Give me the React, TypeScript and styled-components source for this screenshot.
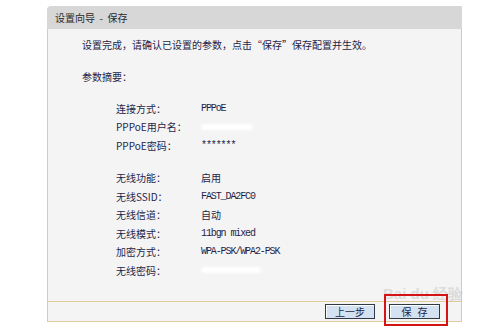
import { createGlobalStyle } from "styled-components";
import styled from "styled-components";

const GlobalStyle = createGlobalStyle`
  html, body {
    margin: 0;
    padding: 0;
    background: #ffffff;
  }
  body {
    font-family: "Noto Sans CJK SC", "Liberation Sans", sans-serif;
    font-size: 10px;
    color: #1f1f48;
  }
`;

const SPage = styled.div`
  width: 500px;
  height: 329px;
  padding: 6px 0 0 47px;
  box-sizing: border-box;
`;

const SPanel = styled.div`
  position: relative;
  width: 415px;
  height: 316px;
  display: flex;
  flex-direction: column;
`;

const SHeader = styled.div`
  height: 23px;
  background: #d7d7d7;
  border-radius: 4px 0 0 0;
  display: flex;
  align-items: center;
  padding-left: 8px;
  font-size: 10px;
  color: #2a2a2a;
  white-space: pre;
`;

const SBody = styled.div`
  flex: 1;
  background: #f4f4f4;
  border: 1px solid #dfc99d;
  border-top: none;
  border-bottom: none;
  padding: 9px 0 0 34px;
  display: flex;
  flex-direction: column;
`;

const SIntro = styled.p`
  margin: 0;
  height: 14px;
  line-height: 14px;
  font-size: 10px;
`;

const SSummary = styled.p`
  margin: 18px 0 0 0;
  height: 14px;
  line-height: 14px;
  font-size: 10px;
`;

const SGroup = styled.div<{ $gap: number }>`
  display: grid;
  grid-template-columns: 85px 1fr;
  grid-auto-rows: 18.5px;
  align-items: center;
  margin-top: ${(p) => p.$gap}px;
  padding-left: 34px;
`;

const SLabel = styled.span`
  font-size: 10px;
  white-space: nowrap;
`;

const SValue = styled.span<{ $mono?: boolean }>`
  font-family: ${(p) =>
    p.$mono ? '"Liberation Mono", monospace' : '"Noto Sans CJK SC", sans-serif'};
  font-size: 10px;
  letter-spacing: ${(p) => (p.$mono ? "-1.1px" : "0")};
  white-space: nowrap;
`;

const SHidden = styled.span<{ $w: number }>`
  display: block;
  width: ${(p) => p.$w}px;
  height: 6px;
  background: #ffffff;
  border-radius: 4px;
  filter: blur(1.5px);
`;

const SFooter = styled.div`
  height: 19px;
  background: #f4f4f4;
  border: 1px solid #dfc99d;
  display: flex;
  align-items: center;
  justify-content: flex-end;
  padding-right: 21px;
  gap: 14px;
`;

const SButton = styled.button<{ $w: number }>`
  width: ${(p) => p.$w}px;
  height: 15px;
  padding: 0;
  background: #d3e1f1;
  border: 1px solid #2f3a48;
  box-shadow: inset 1px 1px 0 #ffffff;
  font-family: "Noto Sans CJK SC", sans-serif;
  font-size: 10px;
  line-height: 13px;
  color: #1f1f48;
  letter-spacing: ${(p) => (p.$w > 50 ? "6px" : "0")};
  text-indent: ${(p) => (p.$w > 50 ? "6px" : "0")};
`;

const SHighlight = styled.div`
  position: absolute;
  left: 337px;
  top: 288px;
  width: 60px;
  height: 28px;
  border: 2px solid #d41414;
  pointer-events: none;
`;

const SWatermark = styled.div`
  position: absolute;
  left: 336px;
  top: 279px;
  font-family: "Liberation Sans", sans-serif;
  font-weight: bold;
  font-size: 15px;
  color: rgba(200, 200, 200, 0.55);
  pointer-events: none;
  white-space: nowrap;
`;

type Row = { label: string; value?: string; mono?: boolean; hidden?: number };

const connection: Row[] = [
  { label: "连接方式：", value: "PPPoE", mono: true },
  { label: "PPPoE用户名：", hidden: 52 },
  { label: "PPPoE密码：", value: "*******", mono: true },
];

const wireless: Row[] = [
  { label: "无线功能：", value: "启用" },
  { label: "无线SSID：", value: "FAST_DA2FC0", mono: true },
  { label: "无线信道：", value: "自动" },
  { label: "无线模式：", value: "11bgn mixed", mono: true },
  { label: "加密方式：", value: "WPA-PSK/WPA2-PSK", mono: true },
  { label: "无线密码：", hidden: 60 },
];

function renderRows(rows: Row[]) {
  return rows.map((r, i) => [
    <SLabel key={"l" + i}>{r.label}</SLabel>,
    r.hidden ? (
      <SHidden key={"v" + i} $w={r.hidden} />
    ) : (
      <SValue key={"v" + i} $mono={r.mono}>
        {r.value}
      </SValue>
    ),
  ]);
}

export default function App() {
  return (
    <SPage>
      <GlobalStyle />
      <SPanel>
        <SHeader>{"设置向导  -  保存"}</SHeader>
        <SBody>
          <SIntro>设置完成，请确认已设置的参数，点击“保存”保存配置并生效。</SIntro>
          <SSummary>参数摘要：</SSummary>
          <SGroup $gap={15}>{renderRows(connection)}</SGroup>
          <SGroup $gap={14}>{renderRows(wireless)}</SGroup>
        </SBody>
        <SFooter>
          <SButton $w={50}>上一步</SButton>
          <SButton $w={51}>保存</SButton>
        </SFooter>
        <SWatermark>Bai du 经验</SWatermark>
        <SHighlight />
      </SPanel>
    </SPage>
  );
}
